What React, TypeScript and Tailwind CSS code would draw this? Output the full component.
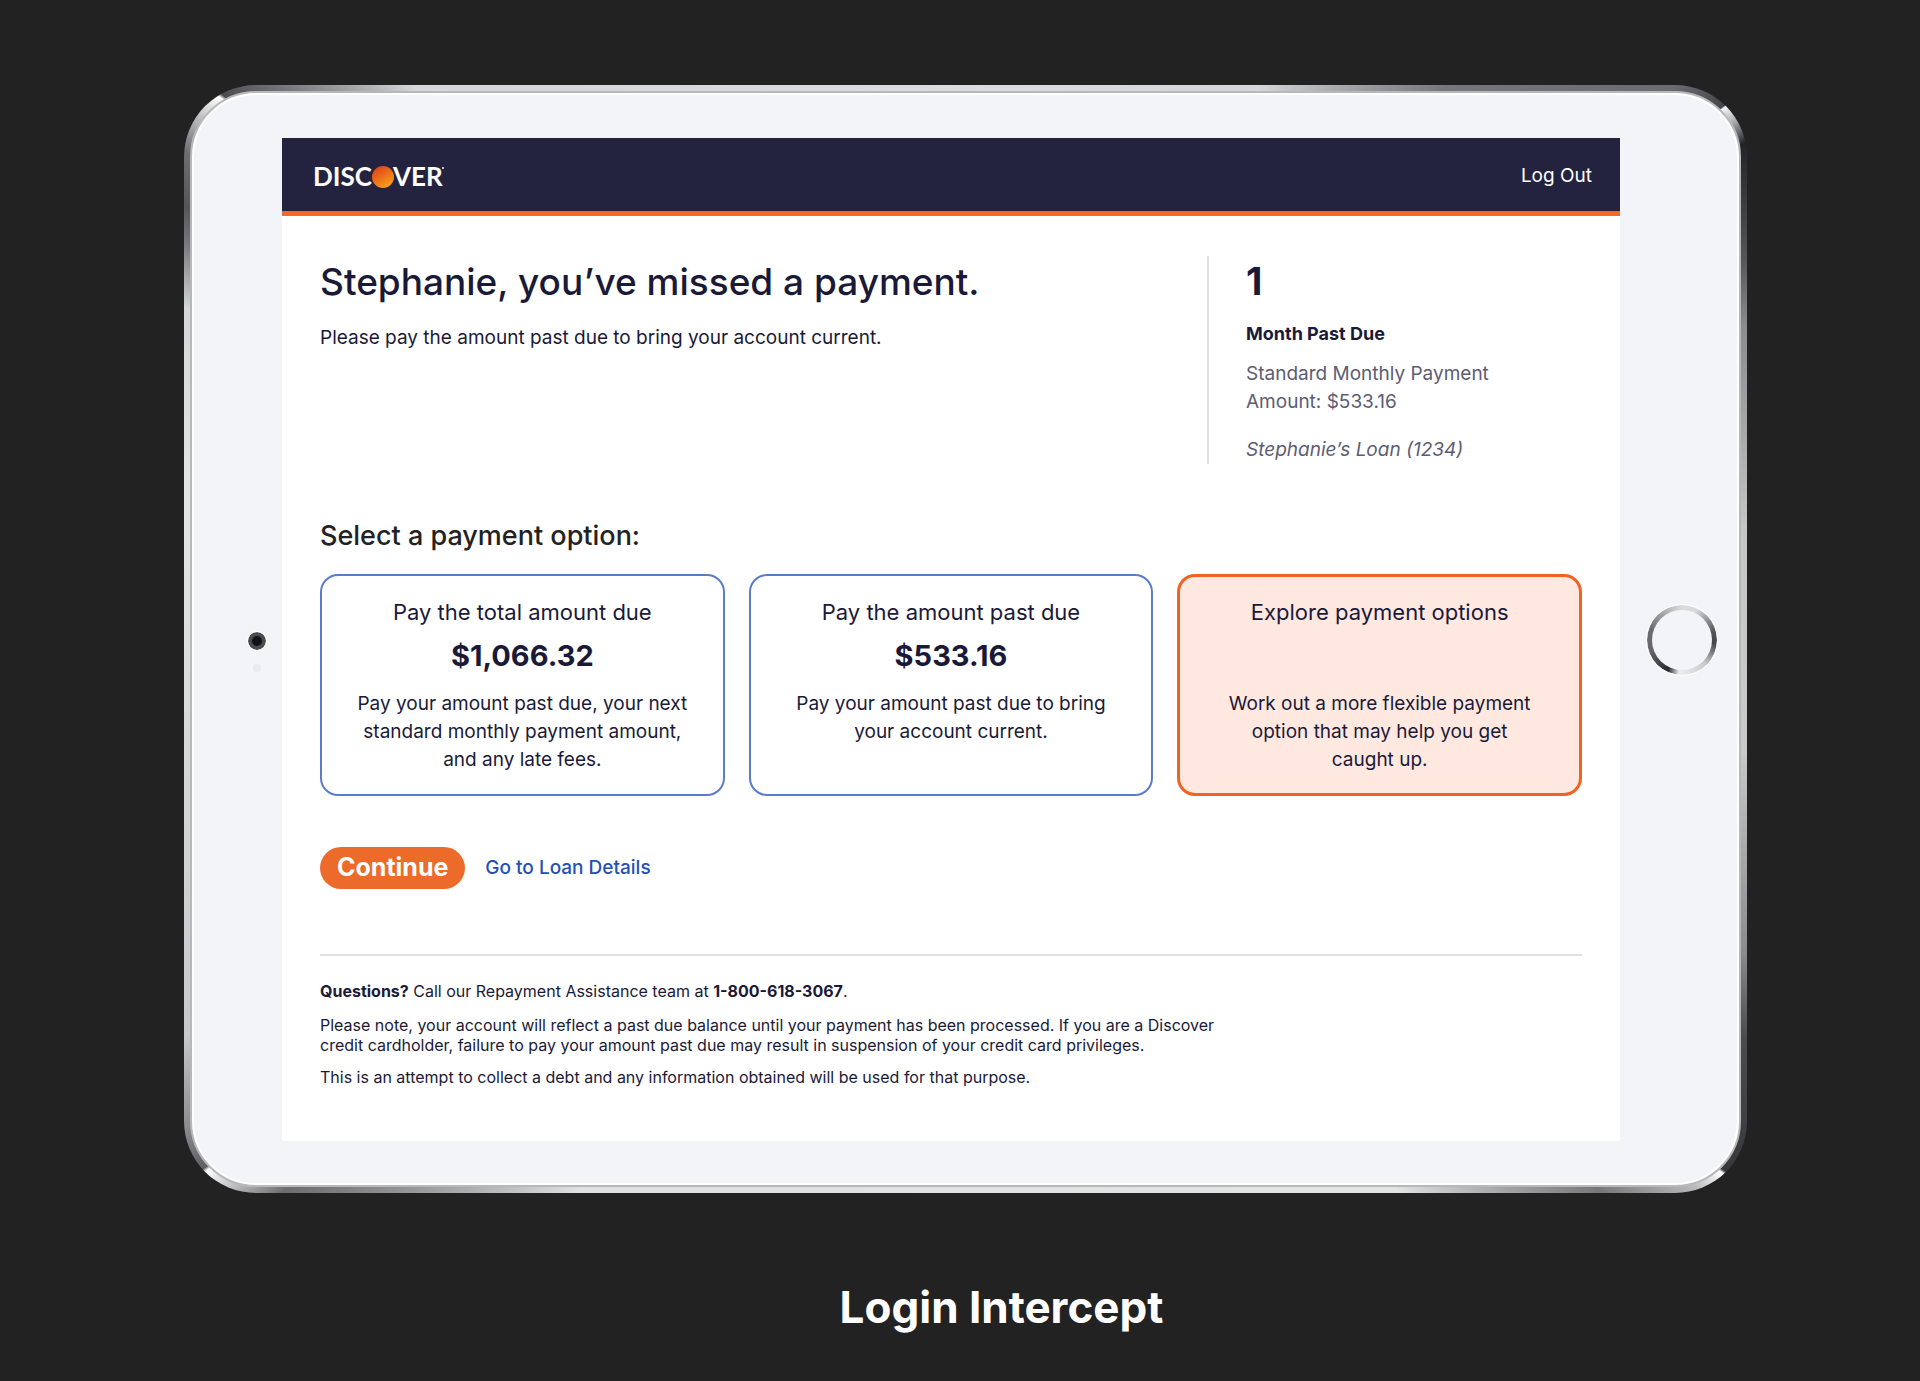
import { useState } from 'react'

const options = [
  {
    id: 'total',
    title: 'Pay the total amount due',
    amount: '$1,066.32',
    text: 'Pay your amount past due, your next\nstandard monthly payment amount,\nand any late fees.',
  },
  {
    id: 'past-due',
    title: 'Pay the amount past due',
    amount: '$533.16',
    text: 'Pay your amount past due to bring\nyour account current.',
  },
  {
    id: 'explore',
    title: 'Explore payment options',
    amount: '',
    text: 'Work out a more flexible payment\noption that may help you get\ncaught up.',
  },
]

function Logo() {
  return (
    <svg width="134" height="40" viewBox="0 0 134 40" role="img" aria-label="Discover">
      <defs>
        <linearGradient id="sun" x1="0.2" y1="0" x2="0.8" y2="1">
          <stop offset="0.1" stopColor="#dd4a1a" />
          <stop offset="0.5" stopColor="#ec7219" />
          <stop offset="1" stopColor="#f9a51b" />
        </linearGradient>
      </defs>
      <g fill="#fff" fontFamily="Lato, sans-serif" fontWeight="700" fontSize="26">
        <text x="-1" y="29">DISC</text>
        <text x="79" y="29">VER</text>
      </g>
      <circle cx="69" cy="20" r="11" fill="url(#sun)" />
      <circle cx="129" cy="11" r="1" fill="#fff" />
    </svg>
  )
}

export default function App() {
  const [selected, setSelected] = useState('explore')

  return (
    <div className="flex min-h-screen flex-col items-center bg-[#222222] pt-[85px] pr-8 pl-[43px] font-['Inter',sans-serif] text-[#1a1a38]">
      {/* Tablet body */}
      <div className="w-full max-w-[1563px] rounded-[72px] bg-[conic-gradient(#dadcdd_0deg,#d5d7d8_28deg,#77767b_41deg,#6c6b70_52deg,#44444a_54.9deg,#f4f5f5_55deg,#b0b1b3_56deg,#242428_57.5deg,#55555a_64deg,#8b8a8f_68deg,#c5c6c6_82deg,#c9caca_98deg,#8b8a8f_112deg,#4b4b50_117deg,#38383c_125deg,#ffffff_125.2deg,#b8b8ba_127deg,#77767a_131deg,#e2e4e4_142deg,#dfe2e2_215deg,#6d6c71_231deg,#ffffff_235deg,#5f5e63_235.2deg,#8d8c91_238deg,#c8c9ca_243deg,#e4e6e5_280deg,#d5d6d7_293deg,#77767c_297deg,#55555a_299deg,#6d6c71_302deg,#ffffff_306deg,#4a4a50_306.2deg,#77767a_309deg,#d5d7d8_315deg,#dadcdd_360deg)] p-[6px]">
        <div className="flex items-center rounded-[66px] border-2 border-[#b7b8ba] bg-[#f3f4f7] pt-[45px] pb-[44px] shadow-[inset_0_0_0_2px_#ffffff]">
          <div className="flex w-[90px] shrink-0 flex-col items-end gap-3.5 pt-6 pr-4">
            <div className="size-[18px] rounded-full border-4 border-[#4b4b4c] bg-[#101018] outline-1 outline-white" />
            <div className="mr-[5px] size-2 rounded-full bg-[#e9eaec]" />
          </div>

          {/* Screen */}
          <div className="min-w-0 flex-1 bg-white">
            <header className="flex h-[78px] items-center justify-between border-b-[5px] border-[#f26a23] bg-[#24233f] pt-1 pr-7 pl-8">
              <Logo />
              <a href="#logout" className="text-[19px] text-white">Log Out</a>
            </header>

            <main className="px-[38px] pt-10 pb-[54px]">
              <section className="flex justify-between">
                <div className="pt-0.5">
                  <h1 className="text-[37px] leading-[48px] font-medium">Stephanie, you’ve missed a payment.</h1>
                  <p className="mt-[18px] text-[19px] leading-7">Please pay the amount past due to bring your account current.</p>
                </div>
                <aside className="w-[375px] border-l-2 border-[#e1e2e4] pl-[37px]">
                  <p className="text-[38px] leading-[50px] font-bold">1</p>
                  <h2 className="mt-3.5 text-lg leading-7 font-bold">Month Past Due</h2>
                  <p className="mt-3 text-[19px] leading-7 text-[#5d5c74]">
                    Standard Monthly Payment
                    <br />
                    Amount: $533.16
                  </p>
                  <p className="mt-5 text-[19px] leading-7 text-[#5d5c74] italic">Stephanie’s Loan (1234)</p>
                </aside>
              </section>

              <fieldset className="mt-14">
                <legend className="mb-[22px] text-[27px] leading-8 font-medium text-[#222]">Select a payment option:</legend>
                <div className="grid grid-cols-3 gap-6">
                  {options.map((option) => (
                    <label
                      key={option.id}
                      className={`block h-[222px] cursor-pointer rounded-[18px] px-6 pt-5 text-center ring-inset ${
                        selected === option.id ? 'bg-[#fee8e0] ring-3 ring-[#ee6420]' : 'ring-2 ring-[#5b7bcb]'
                      }`}
                    >
                      <input
                        type="radio"
                        name="payment-option"
                        value={option.id}
                        checked={selected === option.id}
                        onChange={() => setSelected(option.id)}
                        className="sr-only"
                      />
                      <span className="block text-[22px] leading-9">{option.title}</span>
                      <span className="mt-1 block h-12 text-[29px] leading-[44px] font-bold">{option.amount}</span>
                      <span className="mt-2 block text-[19px] leading-7 whitespace-pre-line">{option.text}</span>
                    </label>
                  ))}
                </div>
              </fieldset>

              <div className="mt-[51px] flex items-center gap-5">
                <button type="button" className="h-[42px] rounded-full bg-[#ed6b2a] px-[17px] text-[25px] font-bold text-white">
                  Continue
                </button>
                <a href="#loan-details" className="text-[19px] font-medium text-[#2450b4]">Go to Loan Details</a>
              </div>

              <footer className="mt-[65px] border-t-2 border-[#e0e1e3] pt-[25px] text-base leading-5">
                <p>
                  <strong>Questions?</strong> Call our Repayment Assistance team at <strong>1-800-618-3067</strong>.
                </p>
                <p className="mt-3.5 max-w-[940px]">
                  Please note, your account will reflect a past due balance until your payment has been processed. If you are a Discover credit cardholder, failure to pay your amount past due may result in suspension of your credit card privileges.
                </p>
                <p className="mt-3">This is an attempt to collect a debt and any information obtained will be used for that purpose.</p>
              </footer>
            </main>
          </div>

          <div className="flex w-[119px] shrink-0 justify-center pl-1">
            <button
              type="button"
              aria-label="Home"
              className="size-[70px] rounded-full bg-[conic-gradient(#d9dada_0deg,#d9dada_25deg,#55555a_75deg,#44444a_95deg,#c9caca_135deg,#eeeeee_185deg,#29292e_205deg,#66656a_250deg,#6d6c71_290deg,#c0c0c2_340deg,#d9dada_360deg)] p-[5px] outline-1 outline-white"
            >
              <span className="block size-[60px] rounded-full bg-[#f3f4f7]" />
            </button>
          </div>
        </div>
      </div>

      <p className="mt-[86px] pl-[72px] text-[44px] leading-[56px] font-bold text-white">Login Intercept</p>
    </div>
  )
}
